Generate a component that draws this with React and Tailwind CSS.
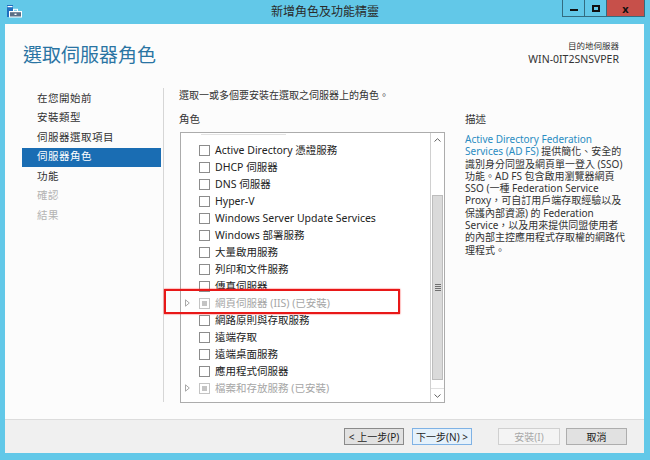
import React from "react";

const F = "font-['Noto_Sans','Noto_Sans_CJK_TC',sans-serif]";

function Checkbox({ installed }) {
  if (installed) {
    return (
      <div className="w-[11px] h-[11px] border border-[#c4c4c4] bg-white flex items-center justify-center">
        <div className="w-[5px] h-[5px] bg-[#c4c4c4]" />
      </div>
    );
  }
  return <div className="w-[11px] h-[11px] border border-[#8c8c8c] bg-white" />;
}

function Tri() {
  return (
    <svg width="5" height="8" viewBox="0 0 5 8">
      <path d="M0.5 0.8 L4.3 4 L0.5 7.2 Z" fill="none" stroke="#a8a8a8" strokeWidth="1" />
    </svg>
  );
}

const roles = [
  { t: "Active Directory 憑證服務" },
  { t: "DHCP 伺服器" },
  { t: "DNS 伺服器" },
  { t: "Hyper-V" },
  { t: "Windows Server Update Services" },
  { t: "Windows 部署服務" },
  { t: "大量啟用服務" },
  { t: "列印和文件服務" },
  { t: "傳真伺服器" },
  { t: "網頁伺服器 (IIS) (已安裝)", installed: true },
  { t: "網路原則與存取服務" },
  { t: "遠端存取" },
  { t: "遠端桌面服務" },
  { t: "應用程式伺服器" },
  { t: "檔案和存放服務 (已安裝)", installed: true },
];

const nav = [
  { t: "在您開始前" },
  { t: "安裝類型" },
  { t: "伺服器選取項目" },
  { t: "伺服器角色", sel: true },
  { t: "功能" },
  { t: "確認", dis: true },
  { t: "結果", dis: true },
];

function Btn({ children, w, variant }) {
  const styles = {
    normal: "border-[#8a8a8a] bg-[#e1e1e1] text-[#1e1e1e]",
    focus: "border-[#7fb2e5] bg-[#e5f1fb] text-[#1e1e1e]",
    disabled: "border-[#d0d0d0] bg-[#f4f4f4] text-[#a8a8a8]",
    cancel: "border-[#adadad] bg-[#e1e1e1] text-[#1e1e1e]",
  };
  return (
    <div
      className={`h-[17px] border flex items-center justify-center text-[10px] leading-none ${styles[variant]}`}
      style={{ width: w }}
    >
      {children}
    </div>
  );
}

export default function App() {
  return (
    <div className={`w-[650px] h-[460px] bg-[#62c8e8] flex flex-col relative overflow-hidden ${F}`}>
      {/* Title bar */}
      <div className="h-[24px] grid grid-cols-[1fr_auto_1fr] items-start">
        <div className="pl-[6px] pt-[5px]">
          <svg width="18" height="13" viewBox="0 0 18 13">
            <rect x="1" y="0" width="6" height="12" fill="#1f6fc0" />
            <rect x="1.5" y="1" width="5" height="1.2" fill="#ffffff" />
            <rect x="3" y="6" width="13" height="6.5" fill="#ffffff" />
            <rect x="4" y="7.2" width="11" height="4.3" fill="#5a6f86" />
            <rect x="7.5" y="4.3" width="4" height="2" fill="none" stroke="#ffffff" strokeWidth="1" />
            <rect x="8.5" y="8.6" width="2" height="1.4" fill="#ffffff" />
          </svg>
        </div>
        <div className="text-[12px] leading-[24px] text-[#2a2a2a]">新增角色及功能精靈</div>
        <div className="flex justify-end pr-[5px]">
          <div className="flex h-[17px] border-x border-b border-[#336c80]">
            <div className="w-[22px] h-full flex items-center justify-center border-r border-[#336c80]">
              <div className="w-[8px] h-[2px] bg-[#111] mt-[3px]" />
            </div>
            <div className="w-[22px] h-full flex items-center justify-center border-r border-[#336c80]">
              <div className="w-[8px] h-[7px] border-2 border-[#111]" />
            </div>
            <div className="w-[37px] h-full flex items-center justify-center bg-[#c7504a] text-[#111] text-[11px] font-bold leading-none">
              x
            </div>
          </div>
        </div>
      </div>

      {/* Client area */}
      <div className="ml-[5px] mr-[6px] h-[429px] flex flex-col">
        <div className="h-[395px] bg-[#fcfcfc] flex flex-col">
          {/* Header */}
          <div className="h-[64px] flex justify-between">
            <div className="pl-[18px] pt-[19px] text-[19px] leading-[24px] text-[#2a74a3]">選取伺服器角色</div>
            <div className="pr-[25px] pt-[16px] flex flex-col items-end text-[#333]">
              <div className="text-[8.5px] leading-[12px]">目的地伺服器</div>
              <div className="text-[10.5px] leading-[14px]">WIN-0IT2SNSVPER</div>
            </div>
          </div>

          {/* Body */}
          <div className="flex flex-1">
            {/* Nav */}
            <div className="w-[158px] pl-[17px] pt-[1px] flex flex-col">
              {nav.map((n) => (
                <div
                  key={n.t}
                  className={`w-[139px] h-[19.5px] pl-[15px] flex items-center text-[10.5px] tracking-[0.5px] ${
                    n.sel ? "bg-[#1a6db3] text-white" : n.dis ? "text-[#b3b3b3]" : "text-[#333]"
                  }`}
                >
                  {n.t}
                </div>
              ))}
            </div>
            <div className="w-px h-[314px] bg-[#d6d6d6]" />

            {/* Content */}
            <div className="pl-[15px] flex flex-col">
              <div className="text-[10px] leading-[14px] text-[#333]">選取一或多個要安裝在選取之伺服器上的角色。</div>
              <div className="flex mt-[10px]">
                {/* Roles column */}
                <div className="flex flex-col">
                  <div className="text-[10.5px] leading-[14px] text-[#333]">角色</div>
                  <div className="ml-px mt-[6px] w-[265px] h-[271px] border border-[#acacac] bg-white flex">
                    <div className="flex-1 relative pt-[8.5px] overflow-hidden">
                      <div className="h-px w-[85px] ml-[20px] -mt-[7.5px] mb-[6.5px] bg-[#e2e2e2]" />
                      {roles.map((r) => (
                        <div key={r.t} className="h-[17px] flex items-center">
                          <div className="w-[18px] pl-[4px] flex items-center">{r.installed ? <Tri /> : null}</div>
                          <Checkbox installed={r.installed} />
                          <div
                            className={`ml-[5px] text-[10.5px] leading-none whitespace-nowrap ${
                              r.installed ? "text-[#a6a6a6]" : "text-[#222]"
                            }`}
                          >
                            {r.t}
                          </div>
                        </div>
                      ))}
                    </div>
                    {/* Scrollbar */}
                    <div className="w-[14px] border-l border-[#d0d0d0] flex flex-col">
                      <div className="h-[14px] flex items-center justify-center">
                        <svg width="7" height="4" viewBox="0 0 7 4">
                          <path d="M0.5 3.5 L3.5 0.7 L6.5 3.5" fill="none" stroke="#606060" strokeWidth="1" />
                        </svg>
                      </div>
                      <div className="h-[48px]" />
                      <div className="h-[185px] mx-px bg-[#dadada] border border-[#bdbdbd] flex flex-col items-center justify-center gap-[1px]">
                        <div className="w-[6px] h-px bg-[#707070]" />
                        <div className="w-[6px] h-px bg-[#707070]" />
                        <div className="w-[6px] h-px bg-[#707070]" />
                        <div className="w-[6px] h-px bg-[#707070]" />
                      </div>
                      <div className="flex-1" />
                      <div className="h-[14px] flex items-center justify-center border-t border-[#e0e0e0]">
                        <svg width="7" height="4" viewBox="0 0 7 4">
                          <path d="M0.5 0.5 L3.5 3.3 L6.5 0.5" fill="none" stroke="#606060" strokeWidth="1" />
                        </svg>
                      </div>
                    </div>
                  </div>
                </div>

                {/* Description column */}
                <div className="ml-[20px] flex flex-col">
                  <div className="text-[10.5px] leading-[14px] text-[#333]">描述</div>
                  <div className="mt-[7px] text-[10px] leading-[12.3px] text-[#333] whitespace-nowrap">
                    <span className="text-[#2a8cc2]">Active Directory Federation</span>
                    <br />
                    <span className="text-[#2a8cc2]">Services (AD FS)</span> 提供簡化、安全的
                    <br />
                    識別身分同盟及網頁單一登入 (SSO)
                    <br />
                    功能。AD FS 包含啟用瀏覽器網頁
                    <br />
                    SSO (一種 Federation Service
                    <br />
                    Proxy，可自訂用戶端存取經驗以及
                    <br />
                    保護內部資源) 的 Federation
                    <br />
                    Service，以及用來提供同盟使用者
                    <br />
                    的內部主控應用程式存取權的網路代
                    <br />
                    理程式。
                  </div>
                </div>
              </div>
            </div>
          </div>
        </div>

        {/* Footer */}
        <div className="h-[34px] bg-[#f0f0f0] border-t border-[#dcdcdc] flex items-center justify-end pr-[17px]">
          <Btn w={60} variant="normal">&lt; 上一步(P)</Btn>
          <div className="w-[8px]" />
          <Btn w={60} variant="focus">下一步(N) &gt;</Btn>
          <div className="w-[26px]" />
          <Btn w={62} variant="disabled">安裝(I)</Btn>
          <div className="w-[6px]" />
          <Btn w={61} variant="cancel">取消</Btn>
        </div>
      </div>

      {/* Red annotation rectangle */}
      <div className="absolute left-[164px] top-[289px] w-[236px] h-[25px] border-[2.5px] border-[#e81818] shadow-[0_0_1.5px_#ff3030]" />
    </div>
  );
}
